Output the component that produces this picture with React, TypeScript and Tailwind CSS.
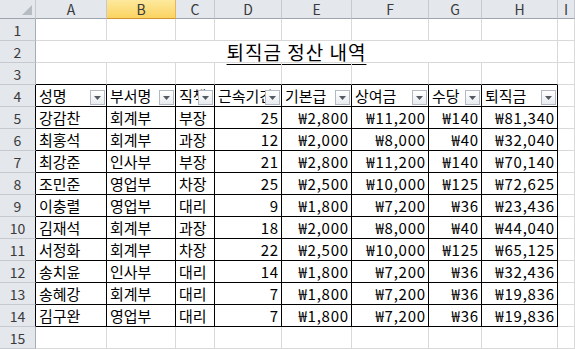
const COLS = ['A', 'B', 'C', 'D', 'E', 'F', 'G', 'H', 'I'];
const HEADERS = ['성명', '부서명', '직책', '근속기간', '기본급', '상여금', '수당', '퇴직금'];

const ROWS: string[][] = [
  ['강감찬', '회계부', '부장', '25', '₩2,800', '₩11,200', '₩140', '₩81,340'],
  ['최홍석', '회계부', '과장', '12', '₩2,000', '₩8,000', '₩40', '₩32,040'],
  ['최강준', '인사부', '부장', '21', '₩2,800', '₩11,200', '₩140', '₩70,140'],
  ['조민준', '영업부', '차장', '25', '₩2,500', '₩10,000', '₩125', '₩72,625'],
  ['이충렬', '영업부', '대리', '9', '₩1,800', '₩7,200', '₩36', '₩23,436'],
  ['김재석', '회계부', '과장', '18', '₩2,000', '₩8,000', '₩40', '₩44,040'],
  ['서정화', '회계부', '차장', '22', '₩2,500', '₩10,000', '₩125', '₩65,125'],
  ['송치윤', '인사부', '대리', '14', '₩1,800', '₩7,200', '₩36', '₩32,436'],
  ['송혜강', '회계부', '대리', '7', '₩1,800', '₩7,200', '₩36', '₩19,836'],
  ['김구완', '영업부', '대리', '7', '₩1,800', '₩7,200', '₩36', '₩19,836'],
];

const grid = 'border-r border-b border-[#d9d9d9]';
const boxed = 'border-r border-b border-black';

function FilterButton() {
  return (
    <div className="absolute right-[1px] bottom-[1px] w-[15px] h-[15px] border border-[#b3b9c2] bg-gradient-to-b from-[#ffffff] to-[#e9ecf0] flex items-center justify-center">
      <svg width="7" height="4" viewBox="0 0 7 4">
        <path d="M0 0h7L3.5 4z" fill="#555a62" />
      </svg>
    </div>
  );
}

function RowHead({ n }: { n: number }) {
  const inTable = n >= 4 && n <= 14;
  return (
    <div
      className={`flex items-center justify-center bg-[#e4e7ec] border-r border-b border-b-[#c6cad0] text-[14px] text-[#3a3a3a] ${
        inTable ? 'border-r-black' : 'border-r-[#a7adb5]'
      }`}
    >
      {n}
    </div>
  );
}

export default function App() {
  return (
    <div className="w-[575px] h-[349px] overflow-hidden bg-white font-['Noto_Sans_CJK_KR','Malgun_Gothic',sans-serif] text-black leading-none">
      <div className="grid grid-cols-[36px_71px_69px_39px_67px_70px_77px_53px_76px_17px] grid-rows-[19px_repeat(15,22px)]">
        {/* column headers */}
        <div className="relative bg-[#e4e7ec] border-r border-b border-r-[#c6cad0] border-b-[#9ea4ad]">
          <svg className="absolute right-[3px] bottom-[3px]" width="10" height="10" viewBox="0 0 10 10">
            <path d="M10 0V10H0z" fill="#b7bcc3" />
          </svg>
        </div>
        {COLS.map((c) =>
          c === 'B' ? (
            <div
              key={c}
              className="flex items-center justify-center bg-gradient-to-b from-[#fde99c] to-[#fbd35f] border-r border-b border-r-[#eab35a] border-b-[#d09234] text-[14px] text-[#3a3a3a]"
            >
              {c}
            </div>
          ) : (
            <div
              key={c}
              className="flex items-center justify-center bg-[#e4e7ec] border-r border-b border-r-[#c6cad0] border-b-[#9ea4ad] text-[14px] text-[#3a3a3a] overflow-hidden"
            >
              {c}
            </div>
          )
        )}

        {/* row 1 */}
        <RowHead n={1} />
        {COLS.map((c) => (
          <div key={c} className={grid} />
        ))}

        {/* row 2: title merged A:H */}
        <RowHead n={2} />
        <div className={`col-span-8 flex items-center justify-center ${grid}`}>
          <span className="text-[19px] underline underline-offset-[4px] decoration-1 tracking-[1px]">
            퇴직금 정산 내역
          </span>
        </div>
        <div className={grid} />

        {/* row 3 */}
        <RowHead n={3} />
        {COLS.map((c, i) => (
          <div key={c} className={i < 8 ? 'border-r border-b border-r-[#d9d9d9] border-b-black' : grid} />
        ))}

        {/* row 4: table header */}
        <RowHead n={4} />
        {HEADERS.map((h) => (
          <div key={h} className={`relative overflow-hidden whitespace-nowrap flex items-center px-[3px] text-[15px] ${boxed}`}>
            {h}
            <FilterButton />
          </div>
        ))}
        <div className={grid} />

        {/* data rows */}
        {ROWS.map((row, r) => (
          <div key={r} className="contents">
            <RowHead n={r + 5} />
            {row.map((v, i) =>
              i < 3 ? (
                <div key={i} className={`overflow-hidden whitespace-nowrap flex items-center px-[3px] text-[15px] ${boxed}`}>
                  {v}
                </div>
              ) : (
                <div
                  key={i}
                  className={`overflow-hidden whitespace-nowrap flex items-center justify-end pl-[3px] pr-[2px] text-[15px] tracking-[0.8px] ${boxed}`}
                >
                  {v}
                </div>
              )
            )}
            <div className={grid} />
          </div>
        ))}

        {/* row 15 */}
        <RowHead n={15} />
        {COLS.map((c) => (
          <div key={c} className={grid} />
        ))}
      </div>
    </div>
  );
}
